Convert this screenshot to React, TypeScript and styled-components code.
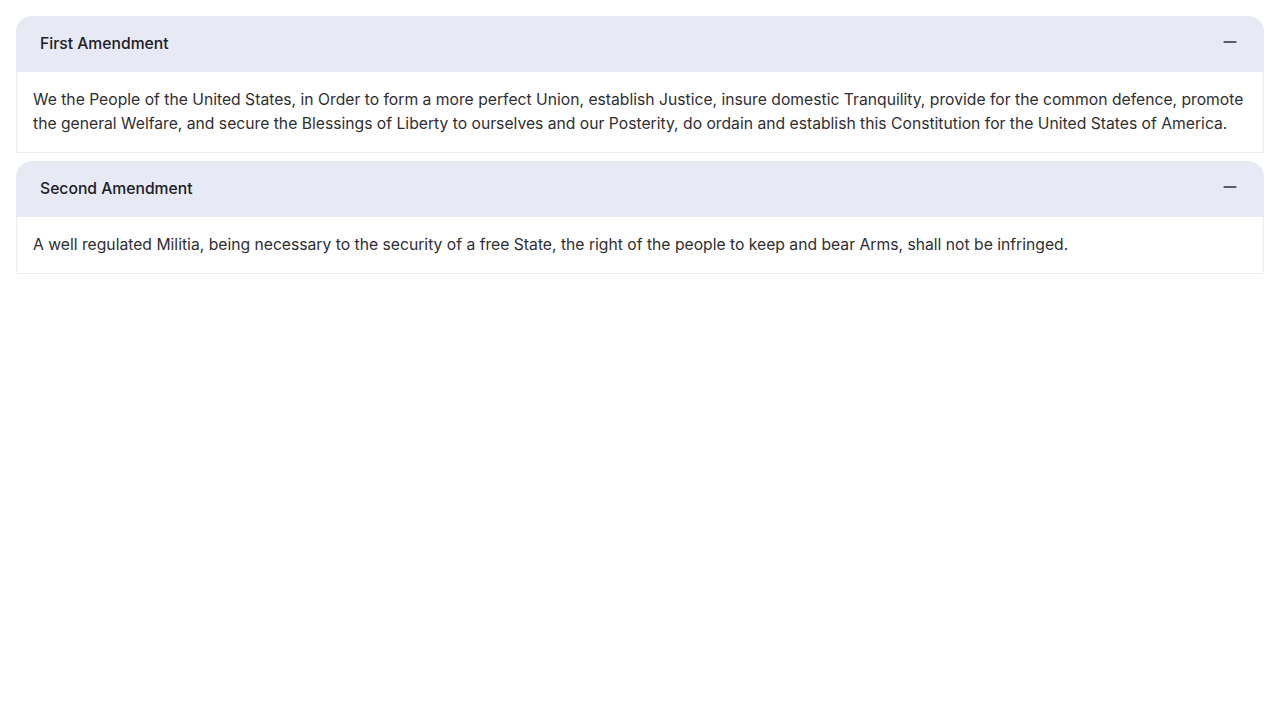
import React, { useState } from "react";
import styled, { createGlobalStyle } from "styled-components";
import { Minus, Plus } from "lucide-react";

const GlobalStyle = createGlobalStyle`
  html, body {
    margin: 0;
    padding: 0;
    background: #ffffff;
  }
  body {
    font-family: Inter, "Noto Sans", "Liberation Sans", sans-serif;
    color: #2a2a2e;
  }
`;

const items = [
  {
    id: "first",
    title: "First Amendment",
    body: "We the People of the United States, in Order to form a more perfect Union, establish Justice, insure domestic Tranquility, provide for the common defence, promote the general Welfare, and secure the Blessings of Liberty to ourselves and our Posterity, do ordain and establish this Constitution for the United States of America.",
  },
  {
    id: "second",
    title: "Second Amendment",
    body: "A well regulated Militia, being necessary to the security of a free State, the right of the people to keep and bear Arms, shall not be infringed.",
  },
];

const App = () => {
  const [open, setOpen] = useState<string[]>(["first", "second"]);
  const toggle = (id: string) =>
    setOpen(prev => (prev.includes(id) ? prev.filter(x => x !== id) : [...prev, id]));

  return (
    <>
      <GlobalStyle />
      <Page>
        {items.map(item => {
          const isOpen = open.includes(item.id);
          return (
            <Item key={item.id}>
              <Header onClick={() => toggle(item.id)}>
                <Title>{item.title}</Title>
                {isOpen ? <Minus size={20} strokeWidth={2} /> : <Plus size={20} strokeWidth={2} />}
              </Header>
              {isOpen && <Content>{item.body}</Content>}
            </Item>
          );
        })}
      </Page>
    </>
  );
};

export default App;

const Page = styled.div`
  display: flex;
  flex-direction: column;
  gap: 8px;
  padding: 16px;
`;

const Item = styled.div`
  display: flex;
  flex-direction: column;
`;

const Header = styled.button`
  all: unset;
  box-sizing: border-box;
  display: flex;
  align-items: center;
  justify-content: space-between;
  height: 56px;
  padding: 0 24px;
  background-color: #e7e9f5;
  border-radius: 16px 16px 0 0;
  cursor: pointer;
  color: #2a2a30;
  svg {
    color: #2e2e36;
    margin-top: -4px;
  }
`;

const Title = styled.span`
  font-family: Inter, "Noto Sans", "Liberation Sans", sans-serif;
  font-size: 15.7px;
  font-weight: 500;
  color: #202024;
  margin-top: -1px;
`;

const Content = styled.div`
  padding: 16px;
  border: 1px solid #ededed;
  border-top: none;
  font-size: 15.7px;
  line-height: 24px;
  color: #2e2e32;
  margin-top: 0;
  span {
    display: block;
  }
`;
